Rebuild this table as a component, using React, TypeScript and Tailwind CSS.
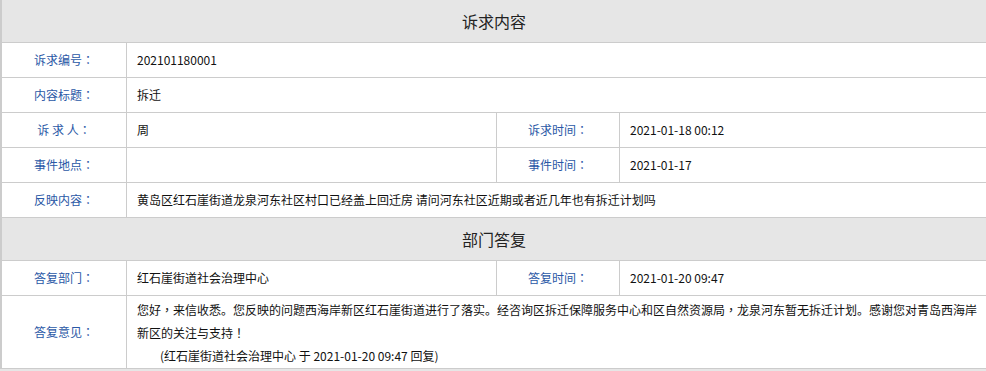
import React from "react";

const font = { fontFamily: '"Noto Sans CJK SC", "Noto Sans", sans-serif' };

function P({ c }: { c: string }) {
  return <span style={{ fontFamily: '"Noto Sans CJK TC", sans-serif' }}>{c}</span>;
}

function Header({ title }: { title: string }) {
  return (
    <div className="h-[43px] bg-[#e6e6e6] border-b border-[#cccccc] flex items-center justify-center text-[16px] text-[#222]">
      {title}
    </div>
  );
}

function Label({ children }: { children: React.ReactNode }) {
  return (
    <div className="border-r border-[#cccccc] flex items-center justify-center text-[#2a58a6]">
      <span>
        {children}
        <P c="：" />
      </span>
    </div>
  );
}

function Value({ children, span = false, last = false }: { children?: React.ReactNode; span?: boolean; last?: boolean }) {
  return (
    <div
      className={
        (span ? "col-span-3 " : "") +
        (last ? "" : "border-r border-[#cccccc] ") +
        "flex items-center pl-[10px] pr-[10px] text-[#111]"
      }
    >
      {children}
    </div>
  );
}

function Row({ children, h = "h-[35px]" }: { children: React.ReactNode; h?: string }) {
  return (
    <div className={`grid grid-cols-[125px_370px_123px_1fr] border-b border-[#cccccc] ${h}`}>
      {children}
    </div>
  );
}

export default function App() {
  return (
    <div className="w-[986px] h-[371px] bg-[#e6e6e6] overflow-hidden text-[12px]" style={font}>
      <div className="bg-white border-l-2 border-[#cccccc]">
        <Header title="诉求内容" />
        <Row>
          <Label>诉求编号</Label>
          <Value span last>202101180001</Value>
        </Row>
        <Row>
          <Label>内容标题</Label>
          <Value span last>拆迁</Value>
        </Row>
        <Row>
          <Label>诉&nbsp;求&nbsp;人</Label>
          <Value>周</Value>
          <Label>诉求时间</Label>
          <Value last>2021-01-18 00:12</Value>
        </Row>
        <Row>
          <Label>事件地点</Label>
          <Value></Value>
          <Label>事件时间</Label>
          <Value last>2021-01-17</Value>
        </Row>
        <Row>
          <Label>反映内容</Label>
          <Value span last>黄岛区红石崖街道龙泉河东社区村口已经盖上回迁房 请问河东社区近期或者近几年也有拆迁计划吗</Value>
        </Row>
        <Header title="部门答复" />
        <Row>
          <Label>答复部门</Label>
          <Value>红石崖街道社会治理中心</Value>
          <Label>答复时间</Label>
          <Value last>2021-01-20 09:47</Value>
        </Row>
        <Row h="h-[73px]">
          <Label>答复意见</Label>
          <div className="col-span-3 pl-[10px] pr-[8px] pt-[2px] leading-[23px] text-[#111]">
            <div>
              您好<P c="，" />来信收悉。您反映的问题西海岸新区红石崖街道进行了落实。经咨询区拆迁保障服务中心和区自然资源局<P c="，" />龙泉河东暂无拆迁计划。感谢您对青岛西海岸新区的关注与支持<P c="！" />
            </div>
            <div className="pl-[23px]">(红石崖街道社会治理中心 于 2021-01-20 09:47 回复)</div>
          </div>
        </Row>
      </div>
    </div>
  );
}
